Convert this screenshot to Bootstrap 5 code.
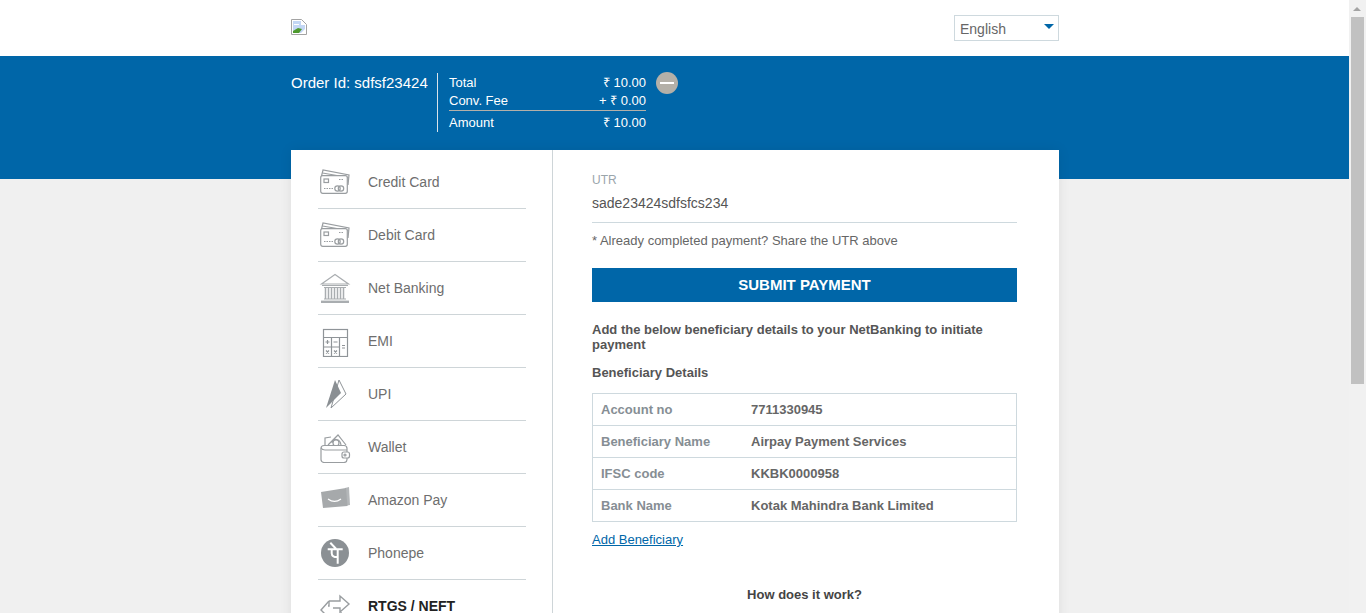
<!DOCTYPE html>
<html lang="en">
<head>
    <meta charset="UTF-8">
    <meta name="viewport" content="width=device-width, initial-scale=1.0">
    <title>Payment</title>
    <link href="https://cdn.jsdelivr.net/npm/bootstrap@5.3.2/dist/css/bootstrap.min.css" rel="stylesheet">
    <style>
        body {
            background-color: #f0f0f0;
            color: #666;
            font-family: "Liberation Sans", Arial, sans-serif;
            font-size: 14px;
            line-height: 16px;
            margin-right: 17px;
        }
        .page-wrap { width: 768px; margin-left: calc(50% - 383.5px); }
        .top-bar { background: #fff; height: 56px; }
        .top-bar .page-wrap { height: 56px; }
        .broken-logo { width: 16px; height: 16px; margin-top: 19px; }
        .lang-box {
            width: 105px; height: 26px; margin-top: 15px;
            border: 1px solid #ced9de;
            font-size: 14px; color: #666;
            padding: 1px 4px 0 5px;
        }
        .lang-arrow { width: 0; height: 0; border-left: 5px solid transparent; border-right: 5px solid transparent; border-top: 5px solid #0066a8; margin-top: -5px; }
        .blue-band { background: #0066a8; height: 123px; color: #fff; }
        .order-id { font-size: 15px; padding-top: 18px; line-height: 18px; width: 146px; }
        .sum-box { margin-top: 17px; height: 58px; padding-top: 1px; border-left: 1px solid #d9e3ea; padding-left: 11px; width: 197px; font-size: 13px; line-height: 18px; box-sizing: content-box; }
        .sum-total { border-top: 1px solid #b4b0a8; padding-top: 3px; }
        .toggle-dot { width: 22px; height: 22px; border-radius: 50%; background: #b4b0a8; margin: 16px 0 0 10px; }
        .toggle-dot span { display: block; width: 14px; height: 2px; background: #fff; }
        .pay-card { background: #fff; margin-top: -29px; box-shadow: 0 0 12px rgba(0,0,0,.08); position: relative; height: 760px; }
        .pay-side { width: 262px; padding: 6px 26px 0 27px; border-right: 1px solid #ced5d8; flex-shrink: 0; }
        .pay-opt { height: 53px; border-bottom: 1px solid #ced5d8; color: #6e6e6e; }
        .pay-opt:last-child { border-bottom-color: transparent; }
        .pay-opt svg { width: 32px; height: 32px; margin-right: 17px; flex-shrink: 0; margin-left: 1px; }
        .pay-opt.active { font-weight: 700; color: #222; }
        .pay-main { padding: 23px 42px 0 39px; flex: 1; min-width: 0; }
        .utr-label { font-size: 12px; line-height: 14px; color: #9aa5ab; }
        .utr-value { font-size: 14px; color: #555; padding: 7px 0 10px; line-height: 18px; border-bottom: 1px solid #ced9de; }
        .utr-note { font-size: 13px; color: #666; margin-top: 11px; line-height: 14px; }
        .submit-btn { background: #0066a8; color: #fff; font-weight: 700; font-size: 15px; height: 34px; border-radius: 0; border: 0; width: 100%; margin-top: 20px; padding: 1px 0 0; }
        .submit-btn:hover { background: #0066a8; color: #fff; }
        .bene-head { font-weight: 700; font-size: 13px; line-height: 15px; color: #555; margin: 20px 0 0; }
        .bene-sub { font-weight: 700; font-size: 13px; line-height: 15px; color: #555; margin: 13px 0 13px; }
        .bene-table { border: 1px solid #ced9de; font-size: 13px; font-weight: 700; }
        .bene-row { height: 32px; border-bottom: 1px solid #ced9de; padding-left: 8px; }
        .bene-row:last-child { border-bottom: 0; height: 31px; }
        .bene-key { width: 150px; color: #868e94; }
        .bene-val { color: #666; }
        .add-link { display: inline-block; font-size: 13px; margin-top: 10px; color: #0066a8; }
        .how-title { font-size: 13px; font-weight: 700; color: #444; text-align: center; margin-top: 39px; }
        .fake-scroll { position: fixed; top: 0; right: 0; bottom: 0; width: 17px; background: #f1f1f1; }
        .fake-scroll-up { position: absolute; top: 7px; left: 4px; width: 0; height: 0; border-left: 4px solid transparent; border-right: 4px solid transparent; border-bottom: 4px solid #a3a3a3; }
        .fake-scroll-thumb { position: absolute; top: 17px; left: 2px; width: 13px; height: 367px; background: #c1c1c1; }
    </style>
</head>
<body>
    <div class="top-bar">
        <div class="page-wrap d-flex justify-content-between align-items-start">
            <svg class="broken-logo" viewBox="0 0 16 16">
                <path d="M.5.5h10l5 5v10H.5z" fill="#fff" stroke="#a3a3a3"/>
                <path d="M2 2h8v4h4v4l-4 4H2z" fill="#c3d7f5"/>
                <path d="M2 14v-2l5-3 4 1-3 4z" fill="#4e9a2e"/>
                <path d="M3 5h5v1H3z" fill="#fff"/>
            </svg>
            <div class="lang-box d-flex justify-content-between align-items-center">
                <span>English</span><span class="lang-arrow"></span>
            </div>
        </div>
    </div>
    <div class="blue-band">
        <div class="page-wrap d-flex">
            <div class="order-id">Order Id: sdfsf23424</div>
            <div class="sum-box">
                <div class="d-flex justify-content-between"><span>Total</span><span>₹ 10.00</span></div>
                <div class="d-flex justify-content-between"><span>Conv. Fee</span><span>+ ₹ 0.00</span></div>
                <div class="sum-total d-flex justify-content-between"><span>Amount</span><span>₹ 10.00</span></div>
            </div>
            <div class="toggle-dot d-flex align-items-center justify-content-center"><span></span></div>
        </div>
    </div>
    <div class="page-wrap pay-card d-flex">
        <div class="pay-side">
            <div class="pay-opt d-flex align-items-center">
                <svg viewBox="0 0 32 32" fill="none" stroke="#999da0" stroke-width="1.200"><path d="M2.500 10 4 4l26 5-1 10"/><path d="M3.500 7 29.500 11.500"/><rect x="1.700" y="9.700" width="26.600" height="17.600" rx="2" fill="#fff"/><rect x="5" y="13" width="4.500" height="3.500"/><path d="M20 13.500h5M5 22.500h10" stroke-dasharray="1.500 1"/><circle cx="18.500" cy="22.500" r="2.700"/><circle cx="22" cy="22.500" r="2.700"/></svg>
                <span>Credit Card</span>
            </div>
            <div class="pay-opt d-flex align-items-center">
                <svg viewBox="0 0 32 32" fill="none" stroke="#999da0" stroke-width="1.200"><path d="M2.500 10 4 4l26 5-1 10"/><path d="M3.500 7 29.500 11.500"/><rect x="1.700" y="9.700" width="26.600" height="17.600" rx="2" fill="#fff"/><rect x="5" y="13" width="4.500" height="3.500"/><path d="M20 13.500h5M5 22.500h10" stroke-dasharray="1.500 1"/><circle cx="18.500" cy="22.500" r="2.700"/><circle cx="22" cy="22.500" r="2.700"/></svg>
                <span>Debit Card</span>
            </div>
            <div class="pay-opt d-flex align-items-center">
                <svg viewBox="0 0 32 32" fill="none" stroke="#a9adb0" stroke-width="1.200"><path d="M2.500 12 16 2.500 29.500 12z" fill="#fff"/><path d="M3 13.500h26M5 15.500h22M5 27h22"/><path d="M6.500 16v11M9.500 16v11M12.500 16v11M15.500 16v11M18.500 16v11M21.500 16v11M24.500 16v11" stroke-width="1.500"/><path d="M2 29.800h28" stroke-width="2.400"/></svg>
                <span>Net Banking</span>
            </div>
            <div class="pay-opt d-flex align-items-center">
                <svg viewBox="0 0 32 32" fill="none" stroke="#8f9498" stroke-width="1.200"><rect x="4.500" y="4.500" width="24" height="27"/><path d="M4.500 12.500h24M12.500 12.500v19M20.500 12.500v19M4.500 22h16"/><path d="M6.500 17h4M8.500 15v4M14.500 17h4M7 25.500l3 3M10 25.500l-3 3M15 25.500l3 3M18 25.500l-3 3M23 20.500h3M23 23h3"/></svg>
                <span>EMI</span>
            </div>
            <div class="pay-opt d-flex align-items-center">
                <svg viewBox="0 0 32 32"><path d="M20 2 27 16 12 30z" fill="#fff" stroke="#8f9498"/><path d="M16 2 22 15 7 30z" fill="#8a8f93"/></svg>
                <span>UPI</span>
            </div>
            <div class="pay-opt d-flex align-items-center">
                <svg viewBox="0 0 32 32" fill="none" stroke="#999da0" stroke-width="1.200"><path d="M6 14V7l6-1M9 14 19 4l8 10"/><path d="M13 12c1-5 8-5 9 2" fill="#fff"/><circle cx="17" cy="12" r="3"/><rect x="2" y="14.500" width="26" height="17" rx="3" fill="#fff"/><path d="M2 17c1 1.500 2 2 4 2h22"/><rect x="23" y="21" width="7.500" height="6" rx="2" fill="#fff"/><circle cx="26" cy="24" r="1"/></svg>
                <span>Wallet</span>
            </div>
            <div class="pay-opt d-flex align-items-center">
                <svg viewBox="0 0 32 32"><path d="M26 4 30 3l1 18-3 .500z" fill="#b4b7b9"/><path d="M2 8 27 4 28.500 22 4 24z" fill="#a6a9ab"/><path d="M9 15c4 3 9 3 13 0" fill="none" stroke="#fff" stroke-width="1.200"/></svg>
                <span>Amazon Pay</span>
            </div>
            <div class="pay-opt d-flex align-items-center">
                <svg viewBox="0 0 32 32"><circle cx="16" cy="16" r="14" fill="#8b9094"/><path d="M8.700 12.300h15M18.700 12.300v14.400M12.700 12.300v4c0 2.800 2.500 4 6 3.700M11.300 5.700l5.700 6" fill="none" stroke="#fff" stroke-width="2"/></svg>
                <span>Phonepe</span>
            </div>
            <div class="pay-opt active d-flex align-items-center">
                <svg viewBox="0 0 32 32" fill="none" stroke="#999da0" stroke-width="1.400"><path d="M10 11H21V6l9 8-9 8v-4H14"/><path d="M10 11 2 20l8 8v-4h12v-2"/><path d="M10 11v5h-1"/></svg>
                <span>RTGS / NEFT</span>
            </div>
        </div>
        <div class="pay-main">
            <div class="utr-label">UTR</div>
            <div class="utr-value">sade23424sdfsfcs234</div>
            <div class="utr-note">* Already completed payment? Share the UTR above</div>
            <button type="button" class="btn submit-btn">SUBMIT PAYMENT</button>
            <p class="bene-head">Add the below beneficiary details to your NetBanking to initiate payment</p>
            <p class="bene-sub">Beneficiary Details</p>
            <div class="bene-table">
                <div class="bene-row d-flex align-items-center"><div class="bene-key">Account no</div><div class="bene-val">7711330945</div></div>
                <div class="bene-row d-flex align-items-center"><div class="bene-key">Beneficiary Name</div><div class="bene-val">Airpay Payment Services</div></div>
                <div class="bene-row d-flex align-items-center"><div class="bene-key">IFSC code</div><div class="bene-val">KKBK0000958</div></div>
                <div class="bene-row d-flex align-items-center"><div class="bene-key">Bank Name</div><div class="bene-val">Kotak Mahindra Bank Limited</div></div>
            </div>
            <a href="#" class="add-link">Add Beneficiary</a>
            <div class="how-title">How does it work?</div>
        </div>
    </div>
    <div class="fake-scroll"><div class="fake-scroll-up"></div><div class="fake-scroll-thumb"></div></div>
    <script src="https://cdn.jsdelivr.net/npm/bootstrap@5.3.2/dist/js/bootstrap.bundle.min.js"></script>
</body>
</html>
